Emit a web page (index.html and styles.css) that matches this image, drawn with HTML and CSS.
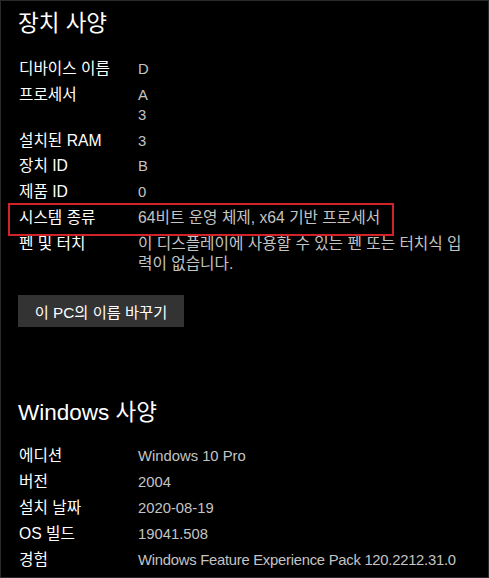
FILE: index.html
```html
<!DOCTYPE html>
<html lang="ko">
<head>
<meta charset="utf-8">
<link rel="stylesheet" href="styles.css">
</head>
<body>
<div class="page">
  <h1 class="heading">장치 사양</h1>
  <div class="specs">
    <div class="row"><div class="label">디바이스 이름</div><div class="value latin">D</div></div>
    <div class="row"><div class="label">프로세서</div><div class="value latin">A<br>3</div></div>
    <div class="row"><div class="label">설치된 RAM</div><div class="value latin">3</div></div>
    <div class="row"><div class="label">장치 ID</div><div class="value latin">B</div></div>
    <div class="row"><div class="label">제품 ID</div><div class="value latin">0</div></div>
    <div class="row highlight"><div class="label">시스템 종류</div><div class="value">64비트 운영 체제, x64 기반 프로세서</div></div>
    <div class="row"><div class="label">펜 및 터치</div><div class="value wrap">이 디스플레이에 사용할 수 있는 펜 또는 터치식 입력이 없습니다.</div></div>
  </div>
  <button class="rename">이 PC의 이름 바꾸기</button>
  <h2 class="heading win">Windows 사양</h2>
  <div class="specs second">
    <div class="row"><div class="label">에디션</div><div class="value latin">Windows 10 Pro</div></div>
    <div class="row"><div class="label">버전</div><div class="value latin">2004</div></div>
    <div class="row"><div class="label">설치 날짜</div><div class="value latin">2020-08-19</div></div>
    <div class="row"><div class="label">OS 빌드</div><div class="value latin">19041.508</div></div>
    <div class="row"><div class="label">경험</div><div class="value latin nowrap">Windows Feature Experience Pack 120.2212.31.0</div></div>
  </div>
</div>
</body>
</html>
```
FILE: styles.css
```css
* { box-sizing: border-box; }
html, body { margin: 0; padding: 0; background: #000; }
.page {
  width: 489px;
  height: 578px;
  border: 1px solid #2a2a2a;
  background: #000;
  padding: 8px 0 0 17px;
  font-family: "Liberation Sans", "Noto Sans CJK KR", sans-serif;
  color: #fff;
  overflow: hidden;
}
.heading {
  margin: 0;
  font-size: 22.5px;
  font-weight: 400;
  line-height: 30px;
  color: #fff;
}
.specs {
  display: flex;
  flex-direction: column;
  gap: 5.8px;
  margin-top: 20px;
}
.second { margin-top: 18px; gap: 6px; }
.row {
  display: grid;
  grid-template-columns: 120px 1fr;
  font-size: 15.7px;
  line-height: 20px;
}
.label { color: #fff; padding-left: 1px; }
.value { color: #c4c4c4; padding-right: 16px; }
.latin { font-size: 14.8px; }
.wrap { word-break: break-all; }
.nowrap { white-space: nowrap; letter-spacing: -0.25px; }
.highlight { position: relative; }
.highlight::after {
  content: "";
  position: absolute;
  left: -10px;
  top: -5px;
  width: 382px;
  height: 29px;
  border: 2px solid #d2222a;
}
.rename {
  display: block;
  margin-top: 21px;
  width: 166px;
  height: 32px;
  border: 0;
  background: #333;
  color: #fff;
  font-family: "Liberation Sans", "Noto Sans CJK KR", sans-serif;
  font-size: 15.3px;
  padding: 0;
}
.win { margin-top: 71px; }
```
